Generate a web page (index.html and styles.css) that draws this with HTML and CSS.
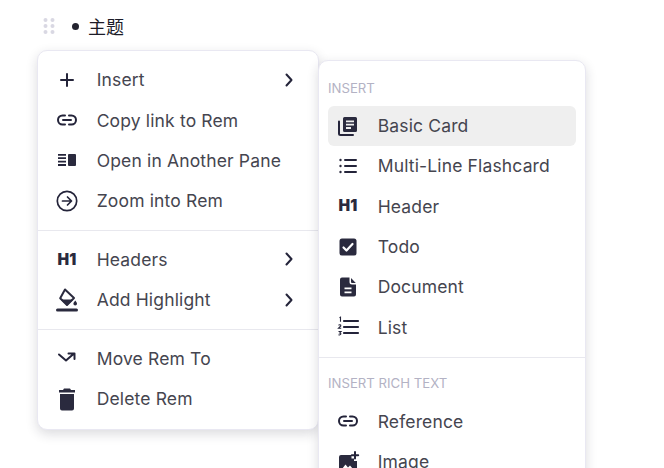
FILE: index.html
```html
<!DOCTYPE html>
<html lang="zh">
<head>
<meta charset="utf-8">
<title>Rem menu</title>
<link rel="stylesheet" href="styles.css">
</head>
<body>
<div class="rem">
  <svg class="drag" width="12" height="18" viewBox="0 0 12 18"><g fill="#d9d8e3"><circle cx="2.500" cy="3" r="2"/><circle cx="9.500" cy="3" r="2"/><circle cx="2.500" cy="9" r="2"/><circle cx="9.500" cy="9" r="2"/><circle cx="2.500" cy="15" r="2"/><circle cx="9.500" cy="15" r="2"/></g></svg>
  <span class="bullet"></span>
  <span class="rem-text">主题</span>
</div>

<div class="menu menu-main">
  <div class="group">
    <div class="row"><span class="ico"><svg width="24" height="24" viewBox="0 0 24 24"><path d="M12 6v12M6 12h12" class="st"/></svg></span><span class="label">Insert</span><svg class="chev" width="10" height="14" viewBox="0 0 10 14"><path d="M2.500 1.500l5 5.500-5 5.500" class="st"/></svg></div>
    <div class="row"><span class="ico"><svg width="24" height="24" viewBox="0 0 24 24"><path d="M10 7.500H7.500a4.500 4.500 0 0 0 0 9H10M14 7.500h2.500a4.500 4.500 0 0 1 0 9H14M8 12h8" class="st"/></svg></span><span class="label">Copy link to Rem</span></div>
    <div class="row"><span class="ico"><svg width="24" height="24" viewBox="0 0 24 24"><path d="M3 6.800h8M3 10.200h8M3 13.600h8M3 17h8" class="thin"/><rect x="13" y="6" width="8" height="12" rx="1" class="fl"/></svg></span><span class="label">Open in Another Pane</span></div>
    <div class="row"><span class="ico"><svg width="24" height="24" viewBox="0 0 24 24"><circle cx="12" cy="12" r="9.700" class="st thin-line"/><path d="M7.500 12h8.500M12.500 8l4 4-4 4" class="st thin-line"/></svg></span><span class="label">Zoom into Rem</span></div>
  </div>
  <div class="group sep">
    <div class="row"><span class="ico"><span class="h1">H1</span></span><span class="label">Headers</span><svg class="chev" width="10" height="14" viewBox="0 0 10 14"><path d="M2.500 1.500l5 5.500-5 5.500" class="st"/></svg></div>
    <div class="row"><span class="ico"><svg width="24" height="24" viewBox="0 0 24 24"><rect x="1" y="20.500" width="22" height="3" rx="1.500" class="fl"/><path d="M10 1.500l9 8.500-7 7-6.800-6.700z" class="bucket"/><path d="M5.500 11.500h13L12 17.500z" class="fl"/><path d="M20.300 12.500c1 1.500 1.700 2.400 1.700 3.300a1.800 1.800 0 0 1-3.600 0c0-.9.800-1.800 1.900-3.300z" class="fl"/></svg></span><span class="label">Add Highlight</span><svg class="chev" width="10" height="14" viewBox="0 0 10 14"><path d="M2.500 1.500l5 5.500-5 5.500" class="st"/></svg></div>
  </div>
  <div class="group sep">
    <div class="row"><span class="ico"><svg width="24" height="24" viewBox="0 0 24 24"><path d="M4 8.500l7 6 8-7M13.500 7.500H19.500v5.500" class="st"/></svg></span><span class="label">Move Rem To</span></div>
    <div class="row"><span class="ico"><svg width="24" height="24" viewBox="0 0 24 24"><path d="M9 1.500h6l1 1.500H20v2.500H4V3h4zM5 7h14v14.500a2 2 0 0 1-2 2H7a2 2 0 0 1-2-2z" class="fl"/></svg></span><span class="label">Delete Rem</span></div>
  </div>
</div>

<div class="menu menu-sub">
  <div class="head">INSERT</div>
  <div class="row active"><span class="ico"><svg width="24" height="24" viewBox="0 0 24 24"><path d="M3 7.500v12a1.500 1.500 0 0 0 1.500 1.500H17" class="st"/><path fill-rule="evenodd" d="M8.500 3h11A1.500 1.500 0 0 1 21 4.500v12a1.500 1.500 0 0 1-1.500 1.500h-11A1.500 1.500 0 0 1 7 16.500v-12A1.500 1.500 0 0 1 8.500 3zM10 6.500V8.300h8V6.500zM10 9.800v1.800h8V9.800zM10 13.100v1.800h5v-1.800z" class="fl"/></svg></span><span class="label">Basic Card</span></div>
  <div class="row"><span class="ico"><svg width="24" height="24" viewBox="0 0 24 24"><path d="M9 6h11M9 12h11M9 18h11" class="st"/><circle cx="4.500" cy="6" r="1.200" class="fl"/><circle cx="4.500" cy="12" r="1.200" class="fl"/><circle cx="4.500" cy="18" r="1.200" class="fl"/></svg></span><span class="label">Multi-Line Flashcard</span></div>
  <div class="row"><span class="ico"><span class="h1">H1</span></span><span class="label">Header</span></div>
  <div class="row"><span class="ico"><svg width="24" height="24" viewBox="0 0 24 24"><rect x="3.500" y="3.500" width="17" height="17" rx="2.500" class="fl"/><path d="M7.500 12.500l3 3 6-6.500" class="chk"/></svg></span><span class="label">Todo</span></div>
  <div class="row"><span class="ico"><svg width="24" height="24" viewBox="0 0 24 24"><path fill-rule="evenodd" d="M6 2.500h7.500V7A2.500 2.500 0 0 0 16 9.500h4v10a2 2 0 0 1-2 2H6a2 2 0 0 1-2-2v-15a2 2 0 0 1 2-2zM8.500 12.500v1.700h7v-1.700zM8.500 16.500v1.700h7v-1.700z" class="fl"/><path d="M15 3l4.800 5H16a1 1 0 0 1-1-1z" class="fl"/></svg></span><span class="label">Document</span></div>
  <div class="row"><span class="ico"><svg width="24" height="24" viewBox="0 0 24 24"><path d="M8 6h14M8 12h14M8 18h14" class="st bar"/><path d="M3.500 2.800l1-.6v4.600M2.500 10.200c1-.8 2.600-.5 2.300.7l-2.300 2.300h2.700M2.500 16.500h2.600l-1.300 1.500c1.800 0 1.300 2.500-1.300 1.800" class="tiny"/></svg></span><span class="label">List</span></div>
  <div class="group sub-sep">
    <div class="head">INSERT RICH TEXT</div>
    <div class="row"><span class="ico"><svg width="24" height="24" viewBox="0 0 24 24"><path d="M10 7.500H7.500a4.500 4.500 0 0 0 0 9H10M14 7.500h2.500a4.500 4.500 0 0 1 0 9H14M8 12h8" class="st"/></svg></span><span class="label">Reference</span></div>
    <div class="row"><span class="ico"><svg width="24" height="24" viewBox="0 0 24 24"><path d="M5 5h10.500v3.500H18V11h3v9a2 2 0 0 1-2 2H5a2 2 0 0 1-2-2V7a2 2 0 0 1 2-2z" class="fl"/><path d="M6 19l3.500-4.500 2.500 3 2-2 3 3.500z" fill="#fff"/><path d="M19 2v6.500M15.800 5.200h6.400" class="st"/></svg></span><span class="label">Image</span></div>
  </div>
</div>
</body>
</html>
```
FILE: styles.css
```css
html, body { margin: 0; padding: 0; height: 100%; }
body {
  width: 664px;
  height: 468px;
  overflow: hidden;
  position: relative;
  background: #fff;
  font-family: Inter, "Noto Sans CJK SC", sans-serif;
  color: #45454f;
}
.rem {
  display: flex;
  align-items: center;
  height: 26px;
  padding: 13px 0 0 43px;
}
.drag { flex: none; }
.bullet {
  width: 7px;
  height: 7px;
  border-radius: 50%;
  background: #23232f;
  margin-left: 17px;
}
.rem-text {
  margin-left: 9px;
  font-size: 18px;
  color: #1c1c28;
  font-family: "Noto Sans CJK SC", sans-serif;
}
.menu {
  position: absolute;
  box-sizing: border-box;
  background: #fff;
  border: 1px solid #e9e8f2;
  border-radius: 10px;
  box-shadow: 0 4px 12px rgba(30, 30, 50, .16);
}
.menu-main {
  left: 37px;
  top: 50px;
  width: 282px;
  height: 380px;
  padding: 8.600px 0 0;
}
.menu-sub {
  left: 318px;
  top: 60px;
  width: 268px;
  height: 440px;
  padding: 14.500px 9px 0;
}
.group.sep { border-top: 1px solid #e8e8ee; margin-top: 9px; padding-top: 8.400px; }
.menu-main .row { padding: 0 24px 0 17px; }
.row {
  display: flex;
  align-items: center;
  height: 40.300px;
  font-size: 17.500px;
  letter-spacing: .15px;
  border-radius: 6px;
}
.menu-sub .row { padding: 0 0 0 8px; }
.row.active { background: #efefef; }
.ico {
  width: 24px;
  height: 24px;
  flex: none;
  display: flex;
  align-items: center;
  justify-content: center;
  margin-right: 17.700px;
}
.h1 {
  font-size: 15.500px;
  font-weight: 900;
  color: #2a2a3e;
  letter-spacing: .3px;
  line-height: 1;
}
.label { flex: 1; white-space: nowrap; }
.chev { flex: none; }
.head {
  font-size: 13.200px;
  line-height: 24px;
  height: 30px;
  color: #b3b2c4;
}
.sub-sep {
  border-top: 1px solid #e8e8ee;
  margin: 10px -9px 0;
  padding: 14px 9px 0;
}
.sub-sep .head { height: 29px; line-height: 22px; }
.st { fill: none; stroke: #24243a; stroke-width: 2; stroke-linecap: round; stroke-linejoin: round; }
.st.bar { stroke-width: 2.200; }
.st.thin-line { stroke-width: 1.700; }
.thin { fill: none; stroke: #24243a; stroke-width: 1.800; }
.tiny { fill: none; stroke: #24243a; stroke-width: 1.100; }
.fl { fill: #2a2a3e; }
.bucket { fill: #fff; stroke: #2a2a3e; stroke-width: 2; stroke-linejoin: round; }
.chk { fill: none; stroke: #fff; stroke-width: 2.200; stroke-linecap: round; stroke-linejoin: round; }
```
